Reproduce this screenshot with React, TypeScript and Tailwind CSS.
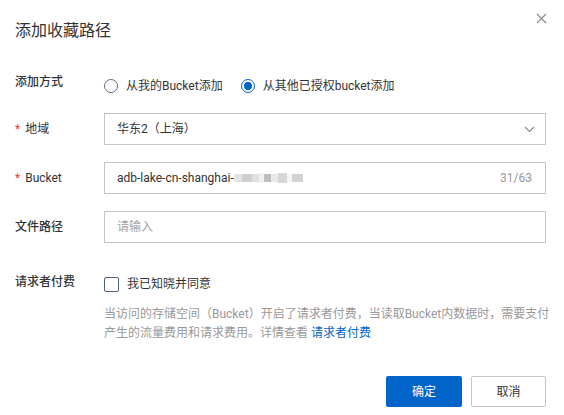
import React from "react";

const font = { fontFamily: 'Roboto, "Noto Sans CJK SC", sans-serif' };

function Label({ children, required }: { children: React.ReactNode; required?: boolean }) {
  return (
    <div className="w-[89px] shrink-0 text-[12px] leading-[16px] text-[#333] font-medium flex items-center">
      {required && <span className="text-[#e23c39] mr-[5px] font-normal">*</span>}
      <span className={required ? "font-normal" : ""}>{children}</span>
    </div>
  );
}

export default function App() {
  return (
    <div className="w-[564px] h-[415px] bg-white relative overflow-hidden" style={font}>
      <button className="absolute left-[536px] top-[13px] w-[11px] h-[11px] flex items-center justify-center">
        <svg width="11" height="11" viewBox="0 0 11 11" fill="none">
          <path d="M1 1L10 10M10 1L1 10" stroke="#8a8a8a" strokeWidth="1.2" />
        </svg>
      </button>
      <div className="pl-[15px] pt-[21px] text-[16px] leading-[20px] text-[#333]">添加收藏路径</div>

      <div className="pl-[15px] pr-[18px]">
        {/* row 1 */}
        <div className="flex items-start mt-[33px] h-[22px]">
          <Label>添加方式</Label>
          <div className="flex items-center mt-[4px] text-[12px] text-[#333] gap-[18px]">
            <label className="flex items-center gap-[8px]">
              <span className="w-[14px] h-[14px] rounded-full border border-[#5b6e86] bg-white" />
              <span className="leading-[16px]">从我的Bucket添加</span>
            </label>
            <label className="flex items-center gap-[8px]">
              <span className="w-[14px] h-[14px] rounded-full border border-[#0064c8] bg-white flex items-center justify-center">
                <span className="w-[8px] h-[8px] rounded-full bg-[#0064c8]" />
              </span>
              <span className="leading-[16px]">从其他已授权bucket添加</span>
            </label>
          </div>
        </div>

        {/* row 2 */}
        <div className="flex items-center mt-[17px]">
          <Label required>地域</Label>
          <div className="flex-1 h-[32px] border border-[#c0c6cc] flex items-center justify-between pl-[12px] pr-[10px] text-[12px] text-[#333]">
            <span>华东2（上海）</span>
            <svg width="11" height="7" viewBox="0 0 11 7" fill="none">
              <path d="M1 1L5.5 5.5L10 1" stroke="#888" strokeWidth="1.1" />
            </svg>
          </div>
        </div>

        {/* row 3 */}
        <div className="flex items-center mt-[17px]">
          <Label required>Bucket</Label>
          <div className="flex-1 h-[32px] border border-[#c0c6cc] flex items-center justify-between pl-[12px] pr-[13px] text-[12px]">
            <span className="flex items-center text-[#333]">
              adb-lake-cn-shanghai-
              <span className="flex items-center h-[10px]">
                <span className="w-[8px] h-[8px] bg-[#e4e4e4]" />
                <span className="w-[10px] h-[8px] bg-[#cfcfcf]" />
                <span className="w-[7px] h-[8px] bg-[#e0e0e0]" />
                <span className="w-[5px] h-[10px] bg-[#f1f1f1]" />
                <span className="w-[7px] h-[8px] bg-[#bdbdbd]" />
                <span className="w-[7px] h-[8px] bg-[#e8e8e8]" />
                <span className="w-[9px] h-[10px] bg-[#d6d6d6]" />
                <span className="w-[5px] h-[8px] bg-[#f4f4f4]" />
                <span className="w-[11px] h-[8px] bg-[#d2d2d2]" />
              </span>
            </span>
            <span className="text-[#999]">31/63</span>
          </div>
        </div>

        {/* row 4 */}
        <div className="flex items-center mt-[17px]">
          <Label>文件路径</Label>
          <div className="flex-1 h-[32px] border border-[#c0c6cc] flex items-center pl-[12px] text-[12px] text-[#a3a3a3]">
            请输入
          </div>
        </div>

        {/* row 5 */}
        <div className="flex items-center mt-[29px]">
          <Label>请求者付费</Label>
          <label className="flex items-center gap-[8px] text-[12px] text-[#333] mt-[4px]">
            <span className="w-[15px] h-[15px] border border-[#4e6280] rounded-[2px] bg-white" />
            <span className="leading-[16px]">我已知晓并同意</span>
          </label>
        </div>

        <p className="ml-[89px] mr-[-6px] mt-[13px] text-[12px] leading-[19px] text-[#999]">
          当访问的存储空间（Bucket）开启了请求者付费，当读取Bucket内数据时，需要支付产生的流量费用和请求费用。详情查看 <a className="text-[#0064c8]">请求者付费</a>
        </p>

        <div className="flex justify-end gap-[9px] mt-[33px]">
          <button className="w-[76px] h-[31px] bg-[#0064c8] text-white text-[12px] rounded-[2px]">确定</button>
          <button className="w-[75px] h-[31px] border border-[#c0c6cc] bg-white text-[#333] text-[12px] rounded-[2px]">取消</button>
        </div>
      </div>
    </div>
  );
}
